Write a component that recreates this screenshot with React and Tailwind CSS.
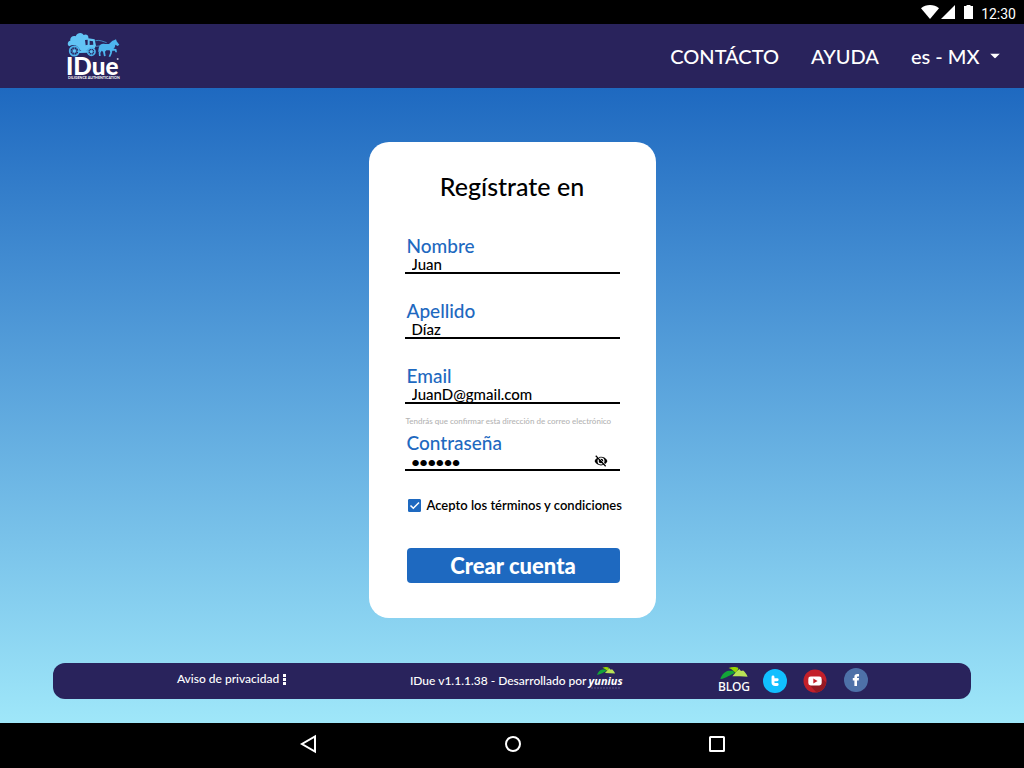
import { useState } from 'react';

const IDueLogo = () => (
  <svg viewBox="51 21 162 147" className="w-[54px] h-[49px]" role="img" aria-label="IDue">
    {/* Coach */}
    <g fill="#62c4f5">
      <path d="M58 64 C50 60 53 48 61 47 C59 37 69 30 77 34 C82 22 96 21 101 30 C108 26 117 30 115 40 L134 43 L138 62 L134 70 L116 72 C108 80 96 82 90 74 C80 58 68 58 58 64 Z" />
      <path d="M80 78 L112 76 L112 83 L88 84 Z" />
    </g>
    <path d="M105 45 L113 44 L113 59 L107 61 Z M119 47 L129 49 L130 59 L119 60 Z" fill="#29235c" />
    <g fill="none" stroke="#4db5ee">
      <circle cx="73" cy="78" r="14" strokeWidth="5" />
      <circle cx="124" cy="80" r="11" strokeWidth="5" />
      <path d="M73 64 V92 M59 78 H87 M63 68 L83 88 M83 68 L63 88" strokeWidth="2" />
      <path d="M124 69 V91 M113 80 H135 M116 72 L132 88 M132 72 L116 88" strokeWidth="2" />
      <path d="M136 47 C150 44 160 50 170 53 M138 64 L158 62" strokeWidth="2" />
    </g>
    <circle cx="73" cy="78" r="5" fill="#62c4f5" />
    <circle cx="124" cy="80" r="4" fill="#62c4f5" />
    {/* Horse */}
    <path
      d="M147 66 C150 56 158 55 165 57 L177 57 C183 53 185 47 192 46 L198 43 L200 49 L208 59 L203 63 L196 59 C195 65 194 69 190 71 L199 72 L201 82 L196 82 L195 77 L187 77 L185 86 L181 95 L176 95 L181 82 L179 76 L169 76 L165 80 L167 93 L162 94 L159 80 L155 77 L151 84 L152 93 L147 93 L146 83 L150 74 C148 78 147 80 144 81 C146 76 145 71 147 66 Z"
      fill="#4db5ee"
    />
    <text x="48" y="150" fontSize="73" fontWeight="900" fontFamily="Lato, sans-serif" fill="#fff">IDue</text>
    <text x="54" y="163" fontSize="11" fontWeight="700" fontFamily="Lato, sans-serif" fill="#fff">DILIGENCE AUTHENTICATION</text>
    <circle cx="203" cy="102" r="3" fill="#bbb8d0" />
  </svg>
);

const Leaves = ({ className }) => (
  <svg viewBox="0 0 86 38" className={className} aria-hidden="true">
    <path d="M0 38 C4 24 14 14 26 12 L40 12 L46 19 C32 24 18 36 0 38 Z" fill="#13a538" />
    <path d="M26 3 C38 -1 50 0 57 3 C56 9 52 14 48 18 L40 11 C36 7 32 5 26 3 Z" fill="#97d700" />
    <path d="M38 29 C46 20 52 12 60 6 L65 13 L72 11 C78 16 84 24 86 31 C70 29 54 30 38 29 Z" fill="#b9e356" />
  </svg>
);

const StatusBar = () => (
  <div className="flex h-6 items-center justify-end bg-black pr-2 text-white">
    <svg viewBox="0 0 18 14" className="w-[18px] h-3.5" fill="currentColor" aria-hidden="true">
      <path d="M0 3.2 C5 -1 13 -1 18 3.2 L9 14 Z" />
    </svg>
    <svg viewBox="0 0 14 14" className="ml-0.5 size-3.5" fill="currentColor" aria-hidden="true">
      <path d="M14 0 V14 H0 Z" />
    </svg>
    <svg viewBox="0 0 9 14" className="ml-[9px] w-[9px] h-3.5" fill="currentColor" aria-hidden="true">
      <path d="M0 1 H2.5 V0 H6.5 V1 H9 V14 H0 Z" />
    </svg>
    <span className="ml-2 pt-1 font-[Roboto,sans-serif] text-sm leading-5">12:30</span>
  </div>
);

const Header = () => (
  <header className="flex h-16 items-center justify-between bg-[#29235c] pr-6 pl-[67px] text-white">
    <a href="#inicio"><IDueLogo /></a>
    <nav className="flex items-center gap-8 text-xl font-medium">
      <a href="#contacto">CONTÁCTO</a>
      <a href="#ayuda">AYUDA</a>
      <div className="relative">
        <select aria-label="Idioma" className="block appearance-none bg-transparent pr-5 outline-none">
          <option>es - MX</option>
        </select>
        <svg viewBox="0 0 10 5" className="pointer-events-none absolute top-1/2 right-0 w-2.5 h-[5px] -translate-y-1/2" fill="currentColor" aria-hidden="true">
          <path d="M0 0 H10 L5 5 Z" />
        </svg>
      </div>
    </nav>
  </header>
);

const Field = ({ id, label, type = 'text', value, onChange, children }) => (
  <div className="relative flex flex-col">
    <label htmlFor={id} className="-mb-0.5 pl-0.5 text-[19px] leading-6 font-medium text-[#1e69c0]">{label}</label>
    <input
      id={id}
      type={type}
      value={value}
      onChange={(e) => onChange(e.target.value)}
      className={`relative h-[18px] w-full border-b-2 border-black bg-white px-[7px] leading-4 text-black outline-none ${
        type === 'password' ? 'text-sm font-black' : 'text-[15px] font-medium'
      }`}
    />
    {children}
  </div>
);

const RegisterForm = () => {
  const [name, setName] = useState('Juan');
  const [lastName, setLastName] = useState('Díaz');
  const [email, setEmail] = useState('JuanD@gmail.com');
  const [password, setPassword] = useState('secret');
  const [showPassword, setShowPassword] = useState(false);
  const [accepted, setAccepted] = useState(true);

  return (
    <form onSubmit={(e) => e.preventDefault()} className="w-[287px] rounded-[20px] bg-white px-9 pt-7 pb-[35px] text-black">
      <h1 className="mb-8 text-center text-[25px] leading-8 font-medium">Regístrate en</h1>

      <div className="flex flex-col gap-[25px]">
        <Field id="name" label="Nombre" value={name} onChange={setName} />
        <Field id="lastName" label="Apellido" value={lastName} onChange={setLastName} />
        <Field id="email" label="Email" value={email} onChange={setEmail} />
      </div>
      <p className="mt-[9px] mb-0.5 pl-px text-[8px] leading-4 font-medium whitespace-nowrap text-[#b4b4b4]">
        Tendrás que confirmar esta dirección de correo electrónico
      </p>
      <Field id="password" label="Contraseña" type={showPassword ? 'text' : 'password'} value={password} onChange={setPassword}>
        <button
          type="button"
          aria-label="Mostrar contraseña"
          onClick={() => setShowPassword(!showPassword)}
          className="absolute right-3 bottom-1"
        >
          <svg viewBox="0 0 24 20" className="w-3.5 h-3" aria-hidden="true">
            <path d="M1 10 C5 0 19 0 23 10 C19 20 5 20 1 10 Z" />
            <circle cx="12" cy="10" r="5" fill="#000" stroke="#fff" strokeWidth="2" />
            <path d="M5 1 L21 18" stroke="#fff" strokeWidth="1.5" />
            <path d="M3 1 L20 19" stroke="#000" strokeWidth="2" />
          </svg>
        </button>
      </Field>

      <label className="mt-6 flex h-5 items-center gap-1.5 pl-[3px] text-[13px] leading-5 font-semibold whitespace-nowrap">
        <span className="relative block size-[13px] shrink-0">
          <input
            type="checkbox"
            checked={accepted}
            onChange={(e) => setAccepted(e.target.checked)}
            className="block size-[13px] appearance-none rounded-[1px] border border-[#1e69c0] checked:bg-[#1e69c0]"
          />
          {accepted && (
            <svg viewBox="0 0 13 13" className="pointer-events-none absolute inset-0 size-[13px]" aria-hidden="true">
              <path d="M2.5 6.5 L5.3 9.3 L11 3.5" fill="none" stroke="#fff" strokeWidth="1.5" />
            </svg>
          )}
        </span>
        Acepto los términos y condiciones
      </label>

      <div className="mt-[33px] pl-0.5">
        <button type="submit" className="block h-[35px] w-full rounded bg-[#1e69c0] text-[22px] leading-6 font-black text-white">
          Crear cuenta
        </button>
      </div>
    </form>
  );
};

const Footer = () => (
  <footer className="mx-[53px] grid h-9 grid-cols-[233fr_308fr_253fr] items-center rounded-xl bg-[#29235c] pl-[12.1%] text-xs font-medium text-white">
    <a href="#privacidad" className="flex items-center gap-1 pb-1">
      Aviso de privacidad
      <svg viewBox="0 0 3 11" className="w-[3px] h-[11px]" fill="currentColor" aria-hidden="true">
        <path d="M0 0 H3 V3 H0 Z M0 4 H3 V7 H0 Z M0 8 H3 V11 H0 Z" />
      </svg>
    </a>

    <div className="flex items-center gap-0.5 whitespace-nowrap">
      <span>IDue v1.1.1.38 - Desarrollado por</span>
      <a href="#yunius" className="flex flex-col items-center pb-1.5">
        <Leaves className="w-[18px] h-2" />
        <span className="font-['Open_Sans',sans-serif] text-[11px] leading-3 font-bold italic">yunius</span>
        <svg viewBox="0 0 30 2" className="w-[30px] h-0.5" aria-hidden="true">
          <path d="M0 1 H30" stroke="#5b5785" strokeDasharray="2 1" />
        </svg>
      </a>
    </div>

    <div className="flex items-center">
      <a href="#blog" className="flex w-8 flex-col items-center font-['Noto_Sans',sans-serif] text-xs leading-4">
        <Leaves className="w-7 h-3" />
        BLOG
      </a>
      <a href="#twitter" aria-label="Twitter" className="ml-[13px]">
        <svg viewBox="0 0 24 24" className="size-6">
          <circle cx="12" cy="12" r="12" fill="#11bfff" />
          <path d="M10 8 V13.5 Q10 15.5 12.2 15.5 H14.2 M10 10.8 H14.2" fill="none" stroke="#fff" strokeWidth="2.9" strokeLinecap="round" />
        </svg>
      </a>
      <a href="#youtube" aria-label="YouTube" className="ml-4">
        <svg viewBox="0 0 24 24" className="size-6">
          <circle cx="12" cy="12" r="11.5" fill="#c4202a" />
          <path d="M17.5 8 L23.3 13.6 A11.5 11.5 0 0 1 13.5 23.4 L6.5 16 Z" fill="#951a23" />
          <rect x="5.3" y="7.5" width="13.4" height="9" rx="2.4" fill="#fff" />
          <path d="M10.3 9.6 L14.6 12 L10.3 14.4 Z" fill="#c4202a" />
        </svg>
      </a>
      <a href="#facebook" aria-label="Facebook" className="ml-[17px] pb-0.5">
        <svg viewBox="0 0 24 24" className="size-6">
          <circle cx="12" cy="12" r="12" fill="#4e71a8" />
          <path d="M10.4 18 V12.4 H8.8 V10 H10.4 V8.8 C10.4 6.8 11.5 6 13.2 6 H15 V8.4 H13.9 C13.2 8.4 13 8.7 13 9.3 V10 H15 L14.7 12.4 H13 V18 Z" fill="#fff" />
        </svg>
      </a>
    </div>
  </footer>
);

const NavBar = () => (
  <div className="flex h-[45px] items-center justify-center gap-45 bg-black pb-[3px] text-white">
    <button type="button" aria-label="Atrás">
      <svg viewBox="0 0 24 24" className="size-6" fill="none" stroke="currentColor" strokeWidth="2">
        <path d="M19 4.5 V19.5 L6 12 Z" />
      </svg>
    </button>
    <button type="button" aria-label="Inicio">
      <svg viewBox="0 0 24 24" className="size-6" fill="none" stroke="currentColor" strokeWidth="2">
        <circle cx="13" cy="12" r="7" />
      </svg>
    </button>
    <button type="button" aria-label="Recientes">
      <svg viewBox="0 0 24 24" className="size-6" fill="none" stroke="currentColor" strokeWidth="2">
        <rect x="6" y="5" width="14" height="14" rx="0.5" />
      </svg>
    </button>
  </div>
);

export default function App() {
  return (
    <div className="flex min-h-screen flex-col font-[Lato,sans-serif]">
      <StatusBar />
      <Header />
      <main className="flex flex-1 flex-col justify-between bg-linear-to-b from-[#1e69c0] to-[#9fe7f9] pt-[54px] pb-6">
        <div className="mb-11 flex justify-center">
          <RegisterForm />
        </div>
        <Footer />
      </main>
      <NavBar />
    </div>
  );
}
